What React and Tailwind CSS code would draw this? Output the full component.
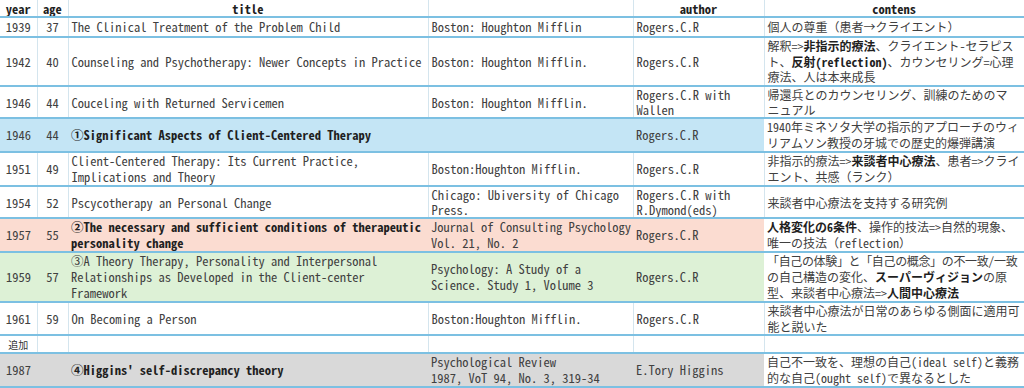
// Rogers chronology table
import React from 'react'

const line = "border-b-2 border-b-[#7cc0e2]"
const vline = "border-r border-r-[#d4e5ee]"

const rows = [
    {
        year: "1939", age: "37", h: "h-[20px] leading-[16px]",
        title: "The Clinical Treatment of the Problem Child",
        pub: "Boston: Houghton Mifflin",
        author: "Rogers.C.R",
        contens: <>個人の尊重（患者→クライエント）</>,
    },
    {
        year: "1942", age: "40", h: "h-[49px] leading-[15.5px]",
        title: "Counseling and Psychotherapy: Newer Concepts in Practice",
        pub: "Boston: Houghton Mifflin.",
        author: "Rogers.C.R",
        contens: <>解釈=&gt;<b>非指示的療法</b>、クライエント-セラピス<br />ト、<b>反射(reflection)</b>、カウンセリング=心理<br />療法、人は本来成長</>,
    },
    {
        year: "1946", age: "44", h: "h-[32px] leading-[15px]",
        title: "Couceling with Returned Servicemen",
        pub: "Boston: Houghton Mifflin.",
        author: <>Rogers.C.R with<br />Wallen</>,
        contens: <>帰還兵とのカウンセリング、訓練のためのマ<br />ニュアル</>,
    },
    {
        year: "1946", age: "44", h: "h-[34px] leading-[16px]", bg: "bg-[#c4e5f5]", bold: true,
        title: "①Significant Aspects of Client-Centered Therapy",
        pub: "",
        author: "Rogers.C.R",
        contens: <>1940年ミネソタ大学の指示的アプローチのウィ<br />リアムソン教授の牙城での歴史的爆弾講演</>,
    },
    {
        year: "1951", age: "49", h: "h-[34px] leading-[16px]",
        title: <>Client-Centered Therapy: Its Current Practice,<br />Implications and Theory</>,
        pub: "Boston:Houghton Mifflin.",
        author: "Rogers.C.R",
        contens: <>非指示的療法=&gt;<b>来談者中心療法</b>、患者=&gt;クライ<br />エント、共感（ランク）</>,
    },
    {
        year: "1954", age: "52", h: "h-[32px] leading-[15px]",
        title: "Pscycotherapy an Personal Change",
        pub: <>Chicago: Ubiversity of Chicago<br />Press.</>,
        author: <>Rogers.C.R with<br />R.Dymond(eds)</>,
        contens: <>来談者中心療法を支持する研究例</>,
    },
    {
        year: "1957", age: "55", h: "h-[34px] leading-[16px]", bg: "bg-[#fbdcd1]", bold: true,
        title: <>②The necessary and sufficient conditions of therapeutic<br />personality change</>,
        pub: <>Journal of Consulting Psychology<br />Vol. 21, No. 2</>,
        author: "Rogers.C.R",
        contens: <><b>人格変化の6条件</b>、操作的技法=&gt;自然的現象、<br />唯一の技法（reflection）</>,
    },
    {
        year: "1959", age: "57", h: "h-[50px] leading-[16px]", bg: "bg-[#ddf1d6]",
        title: <>③A Theory Therapy, Personality and Interpersonal<br />Relationships as Developed in the Client-center<br />Framework</>,
        pub: <>Psychology: A Study of a<br />Science. Study 1, Volume 3</>,
        author: "Rogers.C.R",
        contens: <><span className="tracking-[-0.35px]">「自己の体験」と「自己の概念」の不一致/一致</span><br />の自己構造の変化、<b>スーパーヴィジョン</b>の原<br />型、来談者中心療法=&gt;<b>人間中心療法</b></>,
    },
    {
        year: "1961", age: "59", h: "h-[33px] leading-[15.5px]",
        title: "On Becoming a Person",
        pub: "Boston:Houghton Mifflin.",
        author: "Rogers.C.R",
        contens: <>来談者中心療法が日常のあらゆる側面に適用可<br />能と説いた</>,
    },
]

function Row({ r }) {
    // colored rows have no inner dividers, contens stays white
    const c = r.bg ? `${line} ${r.bg}` : `${line} ${vline} bg-white`
    const t = r.bold ? "font-bold text-[#1f1f1f]" : ""
    return (
        <tr className={r.h}>
            <td className={`${c} text-center`}>{r.year}</td>
            <td className={`${c} text-center`}>{r.age}</td>
            <td className={`${c} px-[3px] ${t}`}>{r.title}</td>
            <td className={`${c} px-[3px]`}>{r.pub}</td>
            <td className={`${c} px-[3px]`}>{r.author}</td>
            <td className={`${line} bg-white px-[3px] text-[12px]`}>{r.contens}</td>
        </tr>
    )
}

export default function App() {
    return (
        <div className="w-[1024px] h-[388px] overflow-hidden bg-white font-['Noto_Sans_Mono_CJK_JP','Liberation_Mono','Noto_Sans_CJK_JP',monospace] text-[12.5px] leading-[15px] text-[#404040]">
            <table className="w-full table-fixed border-collapse [&_td]:py-0 [&_td]:align-middle [&_td]:whitespace-nowrap [&_td]:overflow-hidden [&_b]:font-bold [&_b]:text-[#1f1f1f]">
                <colgroup>
                    <col className="w-[37px]" />
                    <col className="w-[31px]" />
                    <col className="w-[360px]" />
                    <col className="w-[205px]" />
                    <col className="w-[131px]" />
                    <col />
                </colgroup>
                <tbody>
                    <tr className="h-[17px] leading-[15px] font-bold text-[#1f1f1f]">
                        <td className={`${line} ${vline} text-center`}>year</td>
                        <td className={`${line} ${vline} text-center`}>age</td>
                        <td className={`${line} ${vline} text-center`}>title</td>
                        <td className={`${line} ${vline}`}></td>
                        <td className={`${line} ${vline} text-center`}>author</td>
                        <td className={`${line} text-center`}>contens</td>
                    </tr>
                    {rows.map((r, i) => <Row key={i} r={r} />)}
                    <tr className="h-[18px]">
                        <td className={`${line} ${vline} text-center text-[10px] leading-[13px] text-[#333]`}>追加</td>
                        <td className={`${line} ${vline}`}></td>
                        <td className={`${line} ${vline}`}></td>
                        <td className={`${line} ${vline}`}></td>
                        <td className={`${line} ${vline}`}></td>
                        <td className={line}></td>
                    </tr>
                    <tr className="h-[34px] leading-[16px]">
                        <td className={`${line} bg-[#d9d9d9] text-center`}>1987</td>
                        <td className={`${line} bg-[#d9d9d9]`}></td>
                        <td className={`${line} bg-[#d9d9d9] px-[3px] font-bold text-[#1f1f1f]`}>④Higgins' self-discrepancy theory</td>
                        <td className={`${line} bg-[#d9d9d9] px-[3px]`}>Psychological Review<br />1987, VoT 94, No. 3, 319-34</td>
                        <td className={`${line} bg-[#d9d9d9] px-[3px]`}>E.Tory Higgins</td>
                        <td className={`${line} bg-white px-[3px] text-[12px]`}>自己不一致を、理想の自己(ideal self)と義務<br />的な自己(ought self)で異なるとした</td>
                    </tr>
                </tbody>
            </table>
        </div>
    )
}
